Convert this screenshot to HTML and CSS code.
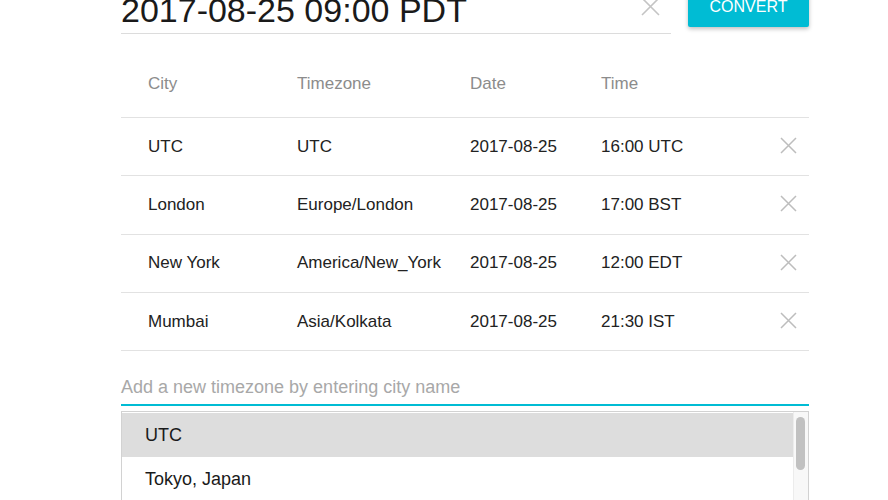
FILE: index.html
```html
<!DOCTYPE html>
<html lang="en">
<head>
    <meta charset="UTF-8">
    <meta name="viewport" content="width=device-width, initial-scale=1.0">
    <title>Timezone Converter</title>
    <link rel="stylesheet" href="styles.css">
</head>
<body>
    <div class="page">
        <div class="top-row">
            <div class="time-field">
                <span class="time-value">2017-08-25 09:00 PDT</span>
                <span class="clear-btn">
                    <svg width="19" height="19" viewBox="0 0 19 19"><path d="M1 1 L18 18 M18 1 L1 18" stroke="#c4c4c4" stroke-width="1.6" fill="none"/></svg>
                </span>
            </div>
            <button class="convert-btn">CONVERT</button>
        </div>

        <div class="zone-table">
            <div class="zone-row head">
                <span>City</span>
                <span>Timezone</span>
                <span>Date</span>
                <span>Time</span>
                <span></span>
            </div>
            <div class="zone-row">
                <span>UTC</span>
                <span>UTC</span>
                <span>2017-08-25</span>
                <span>16:00 UTC</span>
                <span class="remove"><svg width="17" height="17" viewBox="0 0 17 17"><path d="M1 1 L16 16 M16 1 L1 16" stroke="#bdbdbd" stroke-width="1.5" fill="none"/></svg></span>
            </div>
            <div class="zone-row">
                <span>London</span>
                <span>Europe/London</span>
                <span>2017-08-25</span>
                <span>17:00 BST</span>
                <span class="remove"><svg width="17" height="17" viewBox="0 0 17 17"><path d="M1 1 L16 16 M16 1 L1 16" stroke="#bdbdbd" stroke-width="1.5" fill="none"/></svg></span>
            </div>
            <div class="zone-row">
                <span>New York</span>
                <span>America/New_York</span>
                <span>2017-08-25</span>
                <span>12:00 EDT</span>
                <span class="remove"><svg width="17" height="17" viewBox="0 0 17 17"><path d="M1 1 L16 16 M16 1 L1 16" stroke="#bdbdbd" stroke-width="1.5" fill="none"/></svg></span>
            </div>
            <div class="zone-row">
                <span>Mumbai</span>
                <span>Asia/Kolkata</span>
                <span>2017-08-25</span>
                <span>21:30 IST</span>
                <span class="remove"><svg width="17" height="17" viewBox="0 0 17 17"><path d="M1 1 L16 16 M16 1 L1 16" stroke="#bdbdbd" stroke-width="1.5" fill="none"/></svg></span>
            </div>
        </div>

        <div class="add-field">Add a new timezone by entering city name</div>

        <div class="dropdown">
            <ul class="options">
                <li class="active">UTC</li>
                <li>Tokyo, Japan</li>
            </ul>
            <div class="scroll-track"><div class="scroll-thumb"></div></div>
        </div>
    </div>
</body>
</html>
```

FILE: styles.css
```css
html, body {
    margin: 0;
    padding: 0;
    overflow: hidden;
    background: #ffffff;
    font-family: 'Liberation Sans', Arial, sans-serif;
    color: #222;
}
.page {
    width: 688px;
    margin: -9px 0 0 121px;
}
.top-row {
    display: flex;
    align-items: flex-start;
    gap: 17px;
}
.time-field {
    flex: 1;
    display: flex;
    align-items: flex-start;
    padding-bottom: 4px;
    border-bottom: 1px solid #dcdcdc;
}
.time-value {
    flex: 1;
    font-size: 34px;
    line-height: 38px;
    color: #1a1a1a;
}
.clear-btn {
    margin: 6px 11px 0 0;
    display: flex;
}
.convert-btn {
    width: 121px;
    height: 36px;
    border: none;
    border-radius: 2px;
    background: #00bcd4;
    color: #fff;
    font-family: 'Liberation Sans', Arial, sans-serif;
    font-size: 16px;
    padding: 0 0 4px;
    box-shadow: 0 2px 4px rgba(0, 0, 0, 0.25);
}
.zone-row {
    display: grid;
    grid-template-columns: 149px 173px 131px 1fr 17px;
    align-items: center;
    padding: 0 12px 0 27px;
    height: 57.3px;
    border-top: 1px solid #e2e2e2;
    font-size: 17px;
}
.zone-row:last-child {
    border-bottom: 1px solid #e2e2e2;
}
.zone-row.head {
    border-top: none;
    height: 83px;
    align-items: start;
    color: #8c8c8c;
}
.zone-row.head span {
    margin-top: 40px;
}
.remove {
    display: flex;
    margin-top: -2px;
}
.add-field {
    margin-top: 25px;
    font-size: 18px;
    line-height: 22px;
    color: #a8a8a8;
    padding-bottom: 6px;
    border-bottom: 2px solid #00bcd4;
}
.dropdown {
    margin-top: 5px;
    height: 100px;
    border: 1px solid #d2d2d2;
    display: flex;
    overflow: hidden;
}
.options {
    flex: 1;
    list-style: none;
    margin: 1px 0 0;
    padding: 0;
}
.options li {
    height: 44px;
    line-height: 44px;
    padding-left: 23px;
    font-size: 18px;
    color: #1a1a1a;
}
.options li.active {
    background: #dddddd;
}
.scroll-track {
    width: 14px;
    background: #f8f8f8;
    border-left: 1px solid #ececec;
}
.scroll-thumb {
    width: 9px;
    height: 53px;
    margin: 5px 0 0 2px;
    border-radius: 5px;
    background: #c1c1c1;
}
```
